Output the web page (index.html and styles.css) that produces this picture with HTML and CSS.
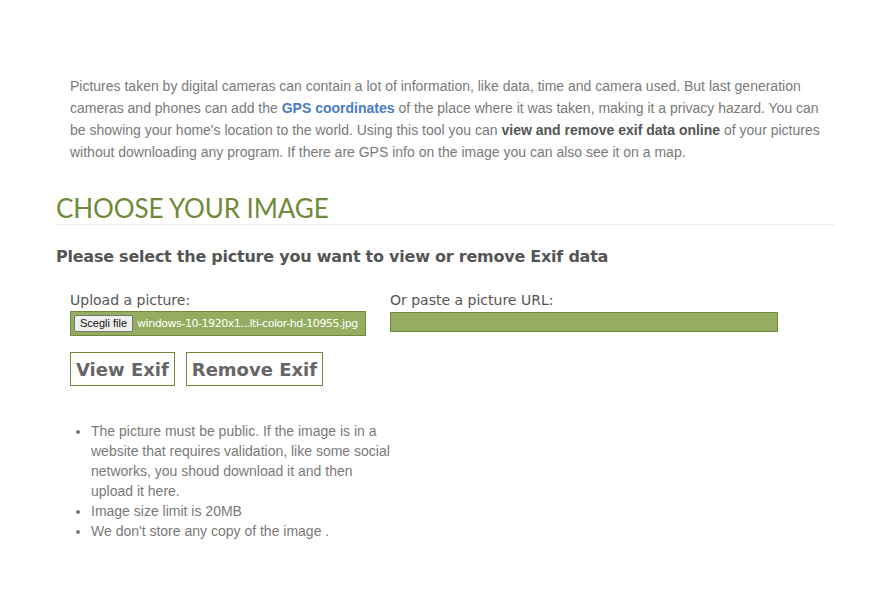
FILE: index.html
```html
<!DOCTYPE html>
<html>
<head>
<meta charset="utf-8">
<link rel="stylesheet" href="styles.css">
</head>
<body>
<div class="page">
  <p class="intro">Pictures taken by digital cameras can contain a lot of information, like data, time and camera used. But last generation cameras and phones can add the <a class="link" href="#">GPS coordinates</a> of the place where it was taken, making it a privacy hazard. You can be showing your home's location to the world. Using this tool you can <strong>view and remove exif data online</strong> of your pictures without downloading any program. If there are GPS info on the image you can also see it on a map.</p>

  <h2 class="section-title">CHOOSE YOUR IMAGE</h2>
  <h3 class="subtitle">Please select the picture you want to view or remove Exif data</h3>

  <div class="form">
    <div class="fields">
      <div class="field">
        <label class="label">Upload a picture:</label>
        <div class="file-box"><span class="file-btn">Scegli file</span><span class="file-name">windows-10-1920x1...lti-color-hd-10955.jpg</span></div>
      </div>
      <div class="field">
        <label class="label">Or paste a picture URL:</label>
        <div class="url-box"></div>
      </div>
    </div>
    <div class="actions">
      <button class="btn">View Exif</button>
      <button class="btn">Remove Exif</button>
    </div>
    <ul class="notes">
      <li>The picture must be public. If the image is in a website that requires validation, like some social networks, you shoud download it and then upload it here.</li>
      <li>Image size limit is 20MB</li>
      <li>We don't store any copy of the image .</li>
    </ul>
  </div>
</div>
</body>
</html>
```
FILE: styles.css
```css
html, body { margin: 0; padding: 0; background: #fff; }
body { font-family: "Liberation Sans", Arial, sans-serif; color: #777; }
.page { padding: 75px 0 0 56px; width: 779px; }
.intro { margin: 0 0 0 14px; font-size: 14px; line-height: 22px; color: #7a7a7a; width: 760px; }
.intro .link { color: #4a7cc4; font-weight: bold; text-decoration: none; }
.intro strong { color: #555; }
.section-title {
  margin: 30px 0 0; padding-bottom: 1px;
  font-family: Lato, sans-serif; font-weight: 400; font-size: 26px; line-height: 30px;
  color: #6f8a3a; border-bottom: 1px solid #eee; letter-spacing: -0.1px;
}
.subtitle {
  margin: 20px 0 0; font-family: "DejaVu Sans", sans-serif; font-weight: bold;
  font-size: 16px; line-height: 24px; color: #555; letter-spacing: -0.24px;
}
.form { padding-left: 14px; margin-top: 22px; }
.fields { display: flex; gap: 24px; }
.field { display: flex; flex-direction: column; }
.label { font-family: "DejaVu Sans", sans-serif; font-size: 14px; line-height: 18px; color: #555; margin-bottom: 2px; }
.file-box {
  width: 291px; height: 23px; background: #94ad60; border: 1px solid #6f8a3a;
  display: flex; align-items: center; gap: 4px; padding-left: 3px;
}
.file-btn {
  font-family: "Liberation Sans", Arial, sans-serif; font-size: 11px; color: #111;
  background: #efefef; border: 1px solid #767676; border-radius: 2px; padding: 1px 5px; line-height: 13px;
}
.file-name { font-family: "DejaVu Sans", sans-serif; font-size: 11px; color: #fff; white-space: nowrap; letter-spacing: -0.45px; }
.url-box { width: 386px; height: 18px; background: #94ad60; border: 1px solid #6f8a3a; margin-top: 1px; }
.actions { display: flex; gap: 11px; margin-top: 16px; }
.btn {
  background: #fff; border: 1px solid #6f8a3a; padding: 0 5px; height: 34px;
  font-family: "DejaVu Sans", sans-serif; font-weight: bold; font-size: 18px; color: #666;
}
.notes { margin: 35px 0 0; padding-left: 21px; width: 305px; font-size: 14px; line-height: 20px; color: #7a7a7a; }
```
